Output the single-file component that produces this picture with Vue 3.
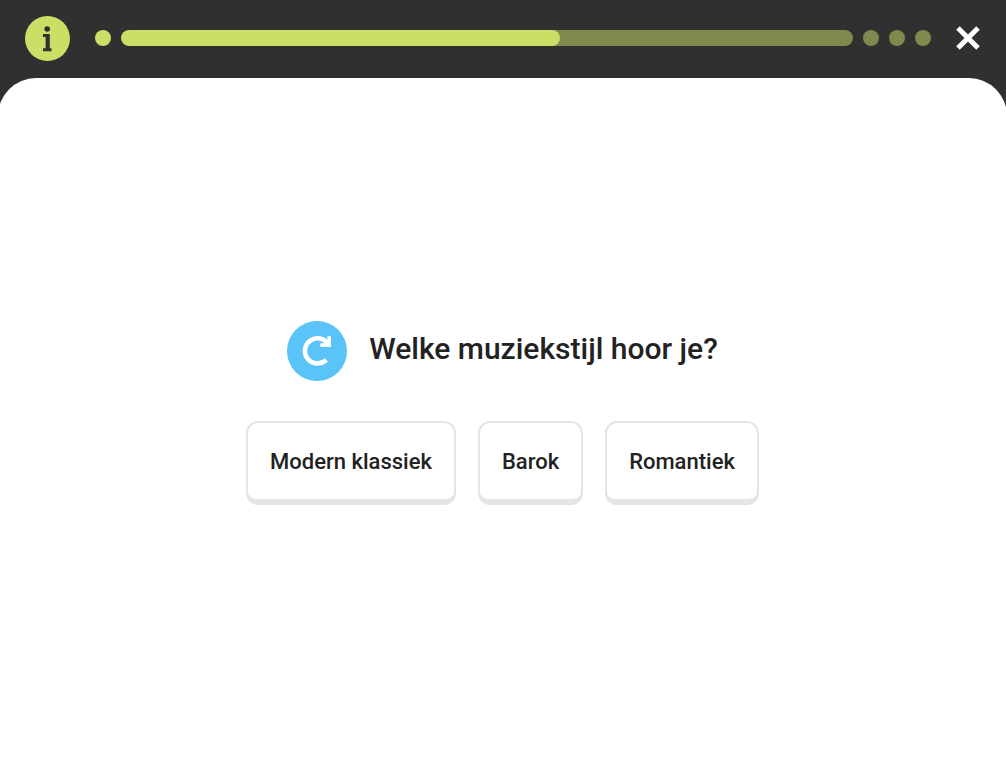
<script setup>
import { ref } from 'vue'

const progress = 60
const upcoming = 3
const answers = ['Modern klassiek', 'Barok', 'Romantiek']
const selected = ref(null)
</script>

<template>
  <div class="lesson">
    <header class="topbar">
      <button class="info" type="button" aria-label="Informatie">
        <svg viewBox="0 0 45 45" aria-hidden="true">
          <circle cx="22.2" cy="13" r="2.8" />
          <path d="M18 18H24.8V32.2H26.5V35.2H18V32.2H20.6V21H18Z" />
        </svg>
      </button>
      <div class="steps">
        <span class="dot done"></span>
        <div class="track" role="progressbar" aria-label="Voortgang" aria-valuemin="0" aria-valuemax="100" :aria-valuenow="progress">
          <div class="fill" :style="{ width: progress + '%' }"></div>
        </div>
        <span v-for="n in upcoming" :key="n" class="dot"></span>
      </div>
      <button class="close" type="button" aria-label="Sluiten">
        <svg viewBox="0 0 24 24" aria-hidden="true">
          <path d="M2 2L22 22M22 2L2 22" />
        </svg>
      </button>
    </header>

    <main class="panel">
      <div class="question">
        <button class="replay" type="button" aria-label="Opnieuw afspelen">
          <svg viewBox="0 0 60 60" aria-hidden="true">
            <path class="arc" d="M39.4 38.8A12.6 12.6 0 1 1 41.4 23.4" />
            <path class="head" d="M40.4 15.2H44V26H33.3V22.2H40.4Z" />
          </svg>
        </button>
        <h1>Welke muziekstijl hoor je?</h1>
      </div>
      <div class="answers">
        <button
          v-for="answer in answers"
          :key="answer"
          class="answer"
          type="button"
          :aria-pressed="selected === answer"
          @click="selected = answer"
        >{{ answer }}</button>
      </div>
    </main>
  </div>
</template>

<style>
body {
  margin: 0;
  background: #303030;
}
</style>

<style scoped>
.lesson {
  display: flex;
  flex-direction: column;
  min-height: 100vh;
  overflow: hidden;
  font-family: Roboto, "Liberation Sans", sans-serif;
  color: #222;
  background: #303030;
}

button {
  border: 0;
  padding: 0;
  font: inherit;
  color: inherit;
  cursor: pointer;
}

svg {
  display: block;
  width: 100%;
  height: 100%;
}

.topbar {
  display: flex;
  align-items: center;
  gap: 25px;
  box-sizing: border-box;
  height: 78px;
  padding: 0 26px 2px 25px;
}

.info {
  flex: none;
  width: 45px;
  height: 45px;
  border-radius: 50%;
  background: #cadf66;
}

.info svg {
  fill: #303030;
}

.steps {
  flex: 1;
  display: flex;
  align-items: center;
  gap: 10px;
}

.dot {
  flex: none;
  width: 16px;
  height: 16px;
  border-radius: 50%;
  background: #7d894d;
}

.dot.done {
  background: #cadf66;
}

.track {
  flex: 1;
  height: 16px;
  border-radius: 8px;
  background: #7d894d;
  overflow: hidden;
}

.fill {
  height: 100%;
  border-radius: 8px;
  background: #cadf66;
}

.close {
  flex: none;
  width: 24px;
  height: 24px;
  background: none;
}

.close svg {
  overflow: visible;
  fill: none;
  stroke: #fff;
  stroke-width: 5;
}

.panel {
  flex: 1;
  display: flex;
  flex-direction: column;
  align-items: center;
  justify-content: center;
  gap: 40px;
  margin: 0 -1px 0 -2px;
  padding-bottom: 17px;
  border-radius: 38px 38px 0 0;
  background: #fff;
}

.question {
  display: flex;
  align-items: center;
  gap: 22px;
}

.replay {
  flex: none;
  width: 60px;
  height: 60px;
  border-radius: 50%;
  background: #5ac3f7;
}

.arc {
  fill: none;
  stroke: #fff;
  stroke-width: 4.6;
}

.head {
  fill: #fff;
}

h1 {
  margin: 0;
  padding-bottom: 4px;
  font-size: 30px;
  font-weight: 500;
  line-height: 40px;
}

.answers {
  display: flex;
  flex-wrap: wrap;
  justify-content: center;
  gap: 22px;
}

.answer {
  padding: 25px 22px 23px;
  border: 2px solid #e5e5e5;
  border-bottom-width: 6px;
  border-radius: 12px;
  background: #fff;
  font-size: 22px;
  font-weight: 500;
  line-height: 28px;
}
</style>
